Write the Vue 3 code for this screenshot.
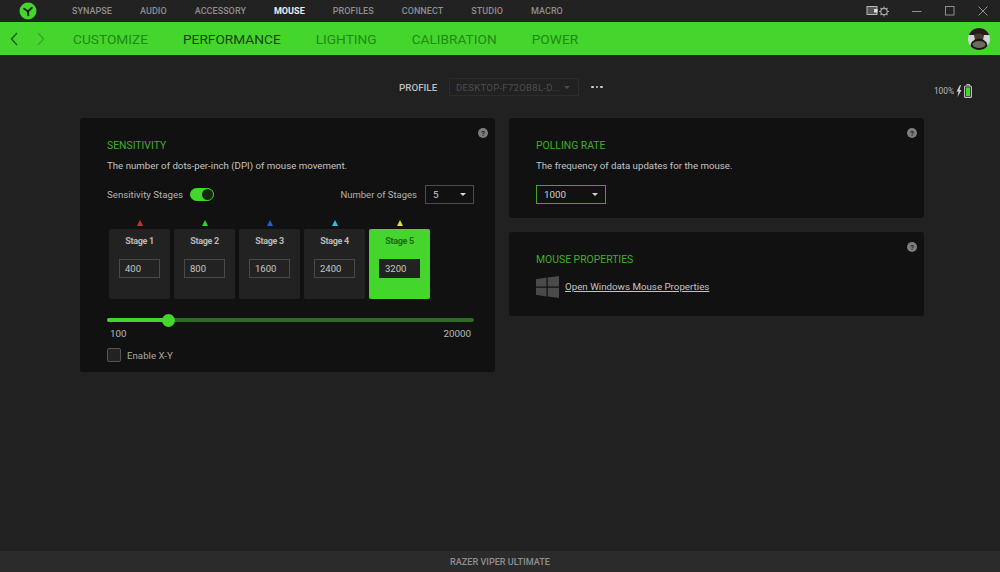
<script setup>
const topTabs = ['SYNAPSE', 'AUDIO', 'ACCESSORY', 'MOUSE', 'PROFILES', 'CONNECT', 'STUDIO', 'MACRO']
const subTabs = ['CUSTOMIZE', 'PERFORMANCE', 'LIGHTING', 'CALIBRATION', 'POWER']
const stages = [
  { name: 'Stage 1', dpi: 400, color: '#d32f2f' },
  { name: 'Stage 2', dpi: 800, color: '#2fd02a' },
  { name: 'Stage 3', dpi: 1600, color: '#1f62d0' },
  { name: 'Stage 4', dpi: 2400, color: '#22c3e6' },
  { name: 'Stage 5', dpi: 3200, color: '#e8dc32', active: true },
]
</script>

<template>
  <div class="app">
    <header class="topbar">
      <svg class="logo" viewBox="0 0 18 18" width="18" height="18">
        <circle cx="9" cy="9" r="8.5" fill="#44d62c" />
        <path d="M9 9.5 L5.200 6.800 M9 9.5 L12.800 5.800 M9 9.5 L9.300 13.400" stroke="#14240f" stroke-width="1.900" fill="none" stroke-linecap="round" />
      </svg>
      <nav class="top-tabs">
        <span v-for="t in topTabs" :key="t" class="top-tab" :class="{ on: t === 'MOUSE' }">{{ t }}</span>
      </nav>
      <div class="win-tools">
        <svg class="tool" viewBox="0 0 26 14" width="26" height="14" fill="none" stroke="#a8a8a8">
          <rect x="1" y="2.5" width="10" height="8" fill="#555" stroke="#b5b5b5" />
          <rect x="8" y="5" width="3.5" height="3.5" fill="#ddd" stroke="none" />
          <circle cx="18" cy="7.5" r="3.2" stroke-width="1.2" />
          <path d="M18 2.5v1.6M18 10.9v1.6M13 7.5h1.6M21.4 7.5H23M14.5 4l1.1 1.1M20.4 9.9l1.1 1.1M21.5 4l-1.1 1.1M15.6 9.9 14.5 11" stroke-width="1.1" />
        </svg>
        <svg class="win-btn min" viewBox="0 0 10 10" width="10" height="10"><path d="M0 5.5h9.5" stroke="#8f8f8f" /></svg>
        <svg class="win-btn max" viewBox="0 0 10 10" width="10" height="10"><rect x=".5" y=".5" width="8.5" height="8.5" fill="none" stroke="#8f8f8f" /></svg>
        <svg class="win-btn close" viewBox="0 0 10 10" width="10" height="10"><path d="M.5.5l9 9M9.5.5l-9 9" stroke="#8f8f8f" /></svg>
      </div>
    </header>

    <div class="greenbar">
      <svg class="arrow" viewBox="0 0 8 14" width="8" height="14"><path d="M7 1 1.5 7 7 13" fill="none" stroke="#1d5a16" stroke-width="1.4" /></svg>
      <svg class="arrow next" viewBox="0 0 8 14" width="8" height="14"><path d="M1 1l5.500 6L1 13" fill="none" stroke="#36a925" stroke-width="1.4" /></svg>
      <nav class="sub-tabs">
        <span v-for="t in subTabs" :key="t" class="sub-tab" :class="{ on: t === 'PERFORMANCE' }">{{ t }}</span>
      </nav>
      <svg class="avatar" viewBox="0 0 22 22" width="22" height="22">
        <defs><clipPath id="av"><circle cx="11" cy="11" r="11" /></clipPath></defs>
        <g clip-path="url(#av)">
          <rect width="22" height="22" fill="#cfd4d6" />
          <rect width="22" height="7" fill="#241c16" />
          <path d="M6 7 Q11 4 16 7 L15 12 H7Z" fill="#4a3a2c" />
          <path d="M2 22 Q2 11 11 10.500 Q20 11 20 22Z" fill="#171614" />
          <ellipse cx="11" cy="16.500" rx="6.500" ry="3.600" fill="#6d6a60" />
        </g>
      </svg>
    </div>

    <main class="content">
      <div class="profile-row">
        <div class="profile">
          <span class="profile-lbl">PROFILE</span>
          <div class="profile-select">
            <span>DESKTOP-F72OB8L-D...</span>
            <i class="caret dim"></i>
          </div>
          <div class="dots"><i></i><i></i><i></i></div>
        </div>
        <div class="battery">
          <span>100%</span>
          <svg viewBox="0 0 6 12" width="6" height="12"><path d="M4 0 .5 6.500h2L1.500 12 5.500 5h-2L5 0Z" fill="#cfcfcf" /></svg>
          <svg viewBox="0 0 8 14" width="8" height="14">
            <path d="M2.500.5h3v1.500" fill="none" stroke="#c8c8c8" />
            <rect x=".6" y="2" width="6.800" height="11.400" rx="1" fill="none" stroke="#c8c8c8" stroke-width="1.100" />
            <rect x="2" y="3.400" width="4" height="8.600" fill="#44d62c" />
          </svg>
        </div>
      </div>

      <div class="cards">
        <section class="card sens">
          <span class="help">?</span>
          <h2>SENSITIVITY</h2>
          <p class="desc">The number of dots-per-inch (DPI) of mouse movement.</p>
          <div class="stage-opts">
            <div class="opt">
              <span>Sensitivity Stages</span>
              <span class="toggle"><i></i></span>
            </div>
            <div class="opt num">
              <span>Number of Stages</span>
              <div class="select small"><span>5</span><i class="caret"></i></div>
            </div>
          </div>
          <div class="stages">
            <div v-for="s in stages" :key="s.name" class="stage-col">
              <i class="marker" :style="{ borderBottomColor: s.color }"></i>
              <div class="stage" :class="{ active: s.active }">
                <div class="stage-name">{{ s.name }}</div>
                <div class="stage-input">{{ s.dpi }}</div>
              </div>
            </div>
          </div>
          <div class="slider">
            <div class="slider-fill"></div>
            <div class="slider-knob"></div>
          </div>
          <div class="slider-labels"><span>100</span><span>20000</span></div>
          <label class="check"><i></i><span>Enable X-Y</span></label>
        </section>

        <div class="right-col">
          <section class="card polling">
            <span class="help">?</span>
            <h2>POLLING RATE</h2>
            <p class="desc">The frequency of data updates for the mouse.</p>
            <div class="select rate"><span>1000</span><i class="caret"></i></div>
          </section>
          <section class="card props">
            <span class="help">?</span>
            <h2>MOUSE PROPERTIES</h2>
            <div class="win-link">
              <svg viewBox="0 0 23 22" width="23" height="22">
                <path d="M0 3.200 10.500 1.600V10.500H0ZM11.700 1.400 23 0V10.500H11.700ZM0 11.700H10.500V20.400L0 18.800ZM11.700 11.700H23V22L11.700 20.600Z" fill="#4a4a4a" />
              </svg>
              <a>Open Windows Mouse Properties</a>
            </div>
          </section>
        </div>
      </div>
    </main>

    <footer class="footer">RAZER VIPER ULTIMATE</footer>
  </div>
</template>

<style>
html, body { margin: 0; background: #212121; }
</style>

<style scoped>
.app {
  width: 1000px; height: 572px; overflow: hidden;
  display: flex; flex-direction: column;
  background: #212121; color: #c8c8c8;
  font-family: Roboto, 'Liberation Sans', sans-serif;
}

.topbar {
  height: 22px; flex: none; display: flex; align-items: center;
  background: #222; padding-left: 19px;
}
.logo { flex: none; }
.top-tabs { display: flex; gap: 28px; margin-left: 35px; }
.top-tab { font-size: 9px; letter-spacing: .05px; color: #8e8e8e; font-weight: 500; line-height: 23px; }
.top-tab.on { color: #f0f0f0; font-weight: 700; }
.win-tools { margin-left: auto; display: flex; align-items: center; }
.tool { margin-right: 20px; }
.win-btn.min { margin-right: 23px; }
.win-btn.max { margin-right: 23px; }
.win-btn.close { margin-right: 12px; }

.greenbar {
  height: 33px; flex: none; display: flex; align-items: center;
  background: #44d62c; padding-left: 10px;
}
.arrow { flex: none; }
.arrow.next { margin-left: 19px; }
.sub-tabs { display: flex; gap: 35px; margin-left: 28px; padding-top: 1px; }
.sub-tab { font-size: 13.700px; line-height: 17px; color: #1f8a14; }
.sub-tab.on { color: #17420f; }
.avatar { margin-left: auto; margin-right: 10px; }

.content { flex: 1; min-height: 0; padding: 0 28px 0 80px; }
.profile-row {
  display: flex; justify-content: space-between; align-items: flex-start;
  padding: 23px 0 0 319px; height: 63px; box-sizing: border-box;
}
.profile { display: flex; align-items: center; height: 18px; }
.profile-lbl { font-size: 9.800px; color: #bdbdbd; font-weight: 500; width: 50px; }
.profile-select {
  width: 130px; height: 18px; box-sizing: border-box;
  display: flex; align-items: center; justify-content: space-between;
  border: 1px solid #2c2c2c; padding: 0 8px 0 6px;
  font-size: 9.600px; letter-spacing: .25px; color: #4c4c4c;
}
.dots { display: flex; gap: 2px; margin-left: 12px; }
.dots i { width: 2.500px; height: 2.500px; border-radius: 50%; background: #cfcfcf; }
.battery {
  display: flex; align-items: center; gap: 2px;
  margin-top: 6px; font-size: 8.300px; color: #bdbdbd;
}

.caret {
  width: 0; height: 0; flex: none;
  border: 3px solid transparent; border-top: 3px solid #d8d8d8; border-bottom: 0;
}
.caret.dim { border-top-color: #4c4c4c; }

.cards { display: flex; gap: 14px; align-items: flex-start; }
.card {
  position: relative; width: 415px; box-sizing: border-box;
  background: #111; border-radius: 3px; padding: 21px 27px 0;
}
.help {
  position: absolute; top: 10px; right: 7px;
  width: 10px; height: 10px; border-radius: 50%;
  background: #7d7d7d; color: #222; font-size: 7.500px; font-weight: 700;
  display: grid; place-items: center;
}
h2 { margin: 0; font-size: 10.400px; line-height: 13px; font-weight: 400; color: #3fae2a; }
.desc { margin: 7px 0 0; font-size: 9.700px; line-height: 13px; color: #c4c4c4; }

.sens { height: 254px; }
.stage-opts {
  display: flex; justify-content: space-between; align-items: center;
  margin: 13px -6px 0 0; font-size: 9.700px; color: #b4b4b4;
}
.opt { display: flex; align-items: center; gap: 7px; height: 19px; }
.opt.num { gap: 8px; font-size: 9.500px; }
.toggle {
  width: 24px; height: 13px; box-sizing: border-box; border-radius: 7px;
  background: #44d62c; display: flex; justify-content: flex-end; align-items: center;
  border: 1px solid #44d62c;
}
.toggle i { width: 11px; height: 11px; border-radius: 50%; background: #14260f; }
.select {
  display: flex; align-items: center; justify-content: space-between; box-sizing: border-box;
  font-size: 9.800px; color: #cfcfcf;
}
.select.small { width: 49px; height: 19px; border: 1px solid #4c4c4c; padding: 0 7px; }
.select.rate { width: 70px; height: 19px; margin-top: 13px; border: 1px solid #3fa52b; padding: 0 7px; }

.stages { display: flex; gap: 4px; margin: 16px 0 0 2px; }
.stage-col { width: 61px; display: flex; flex-direction: column; align-items: center; }
.marker {
  width: 0; height: 0; margin-bottom: 3px;
  border-left: 3px solid transparent; border-right: 3px solid transparent; border-bottom: 6px solid;
}
.stage {
  width: 61px; height: 70px; box-sizing: border-box; border-radius: 2px;
  background: #222; display: flex; flex-direction: column; align-items: center;
  padding-top: 7px;
}
.stage-name { font-size: 9px; letter-spacing: -.3px; line-height: 10px; font-weight: 700; color: #b8b8b8; }
.stage-input {
  width: 41px; height: 19px; box-sizing: border-box; margin-top: 13px; padding-left: 5px;
  border: 1px solid #484848; font-size: 9.500px; line-height: 17px; color: #c8c8c8;
}
.stage.active { background: #44d62c; }
.stage.active .stage-name { color: #1c6a12; }
.stage.active .stage-input { background: #222; border-color: #222; }

.slider {
  position: relative; height: 4px; margin-top: 19px; width: 367px;
  border-radius: 2px; background: #2f6b25;
}
.slider-fill { width: 62px; height: 4px; border-radius: 2px; background: #44d62c; }
.slider-knob {
  position: absolute; left: 55px; top: -4.500px;
  width: 13px; height: 13px; border-radius: 50%; background: #44d62c;
}
.slider-labels {
  display: flex; justify-content: space-between; width: 361px;
  padding-left: 3px; margin-top: 6px; font-size: 9.800px; line-height: 12px; color: #b8b8b8;
}
.check { display: flex; align-items: center; gap: 6px; margin-top: 8px; font-size: 9.700px; color: #a8a8a8; }
.check i {
  width: 14px; height: 14px; box-sizing: border-box; border-radius: 2px;
  border: 1px solid #555; background: #222;
}

.right-col { display: flex; flex-direction: column; gap: 14px; }
.polling { height: 100px; }
.props { height: 84px; }
.win-link { display: flex; align-items: center; gap: 6px; margin-top: 10px; }
.win-link a { font-size: 9.750px; color: #c4c4c4; text-decoration: underline; padding-bottom: 2px; }

.footer {
  height: 21px; flex: none; background: #2b2b2b; color: #8f8f8f;
  display: grid; place-items: center;
  font-size: 9.100px; font-weight: 500;
}
</style>
